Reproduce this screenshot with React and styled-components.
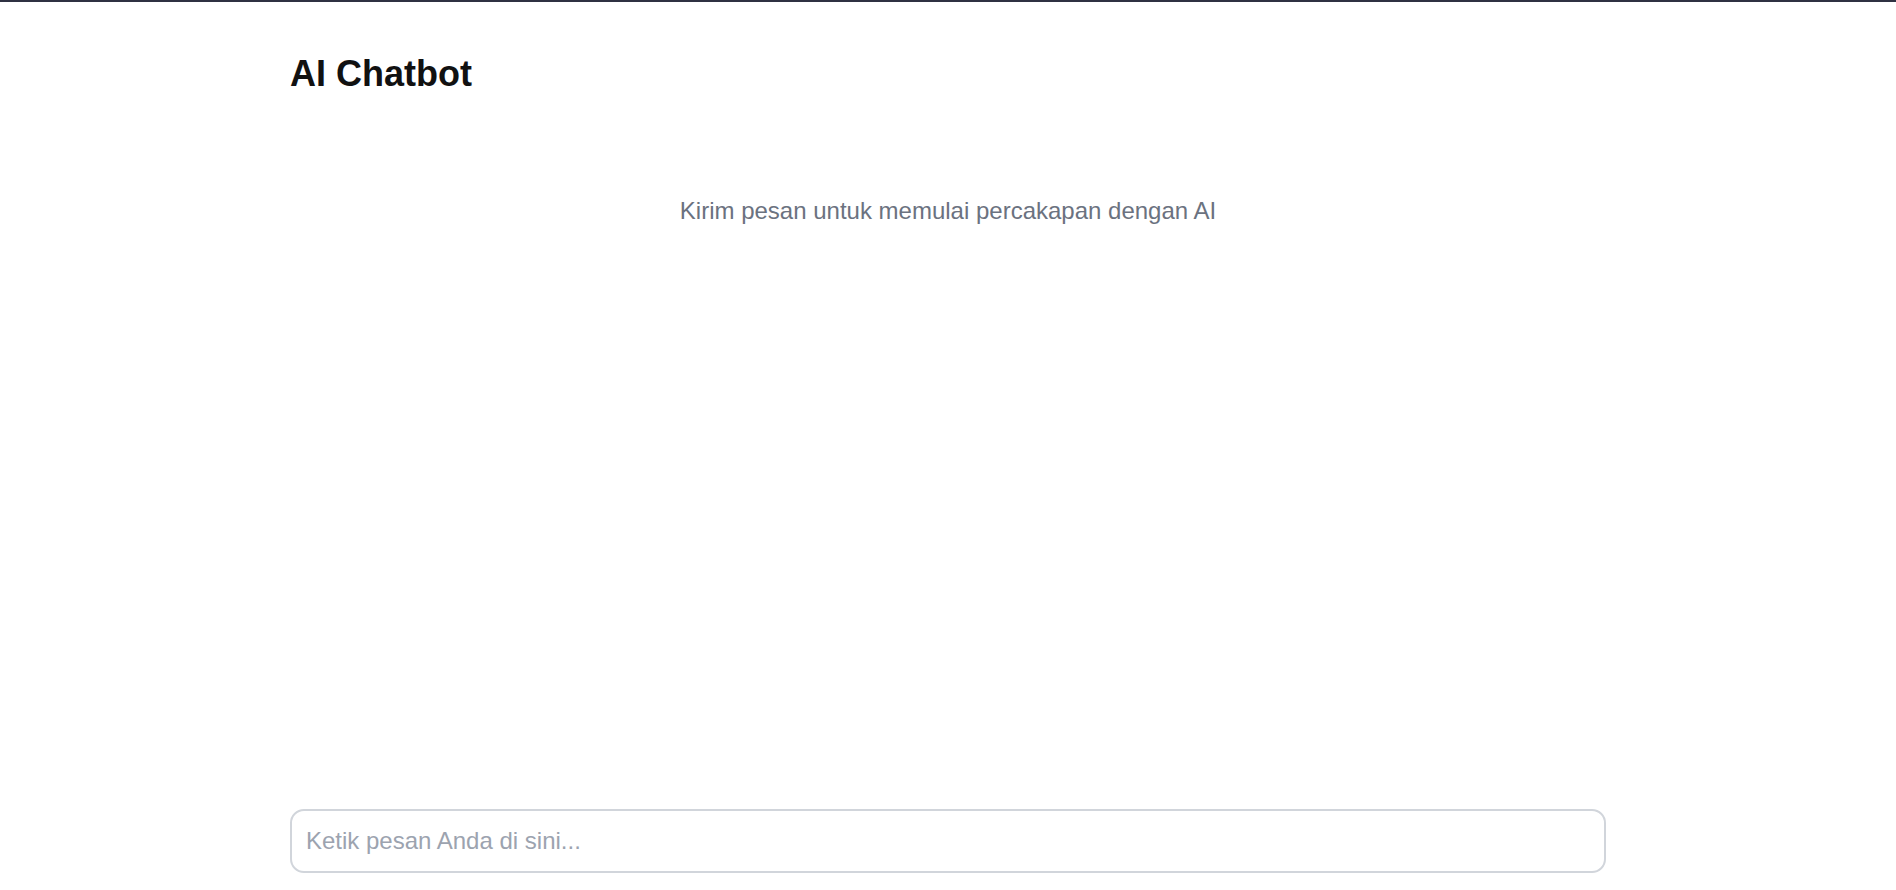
import React, { useState } from "react";
import styled, { createGlobalStyle } from "styled-components";

const GlobalStyle = createGlobalStyle`
  * {
    box-sizing: border-box;
  }

  html,
  body {
    margin: 0;
    padding: 0;
    background: #ffffff;
    font-family: "Liberation Sans", Arial, sans-serif;
  }
`;

const Page = styled.div`
  height: 100vh;
  border-top: 2px solid #2f3142;
  display: flex;
  flex-direction: column;
`;

const Container = styled.main`
  flex: 1;
  width: 100%;
  max-width: 1316px;
  margin: 0 auto;
  padding: 51px 0 17px;
  display: flex;
  flex-direction: column;
  min-height: 0;
`;

const Title = styled.h1`
  margin: 0;
  font-size: 36px;
  font-weight: 700;
  color: #111111;
`;

const Messages = styled.section`
  flex: 1;
  overflow-y: auto;
  padding-top: 102px;
`;

const EmptyText = styled.p`
  margin: 0;
  text-align: center;
  font-size: 24px;
  color: #6b7280;
`;

const InputForm = styled.form`
  display: flex;
`;

const MessageInput = styled.input`
  flex: 1;
  height: 64px;
  padding: 0 14px;
  border: 2.5px solid #d1d5db;
  border-radius: 14px;
  font-family: inherit;
  font-size: 24px;
  color: #111827;
  outline: none;

  &::placeholder {
    color: #9ca3af;
  }
`;

const App = () => {
  const [text, setText] = useState("");
  const [messages, setMessages] = useState([]);

  const handleSubmit = (e) => {
    e.preventDefault();
    if (!text.trim()) return;
    setMessages([...messages, { role: "user", content: text }]);
    setText("");
  };

  return (
    <Page>
      <GlobalStyle />
      <Container>
        <Title>AI Chatbot</Title>
        <Messages>
          {messages.length === 0 ? (
            <EmptyText>Kirim pesan untuk memulai percakapan dengan AI</EmptyText>
          ) : (
            messages.map((m, i) => <p key={i}>{m.content}</p>)
          )}
        </Messages>
        <InputForm onSubmit={handleSubmit}>
          <MessageInput
            value={text}
            onChange={(e) => setText(e.target.value)}
            placeholder="Ketik pesan Anda di sini..."
          />
        </InputForm>
      </Container>
    </Page>
  );
};

export default App;
